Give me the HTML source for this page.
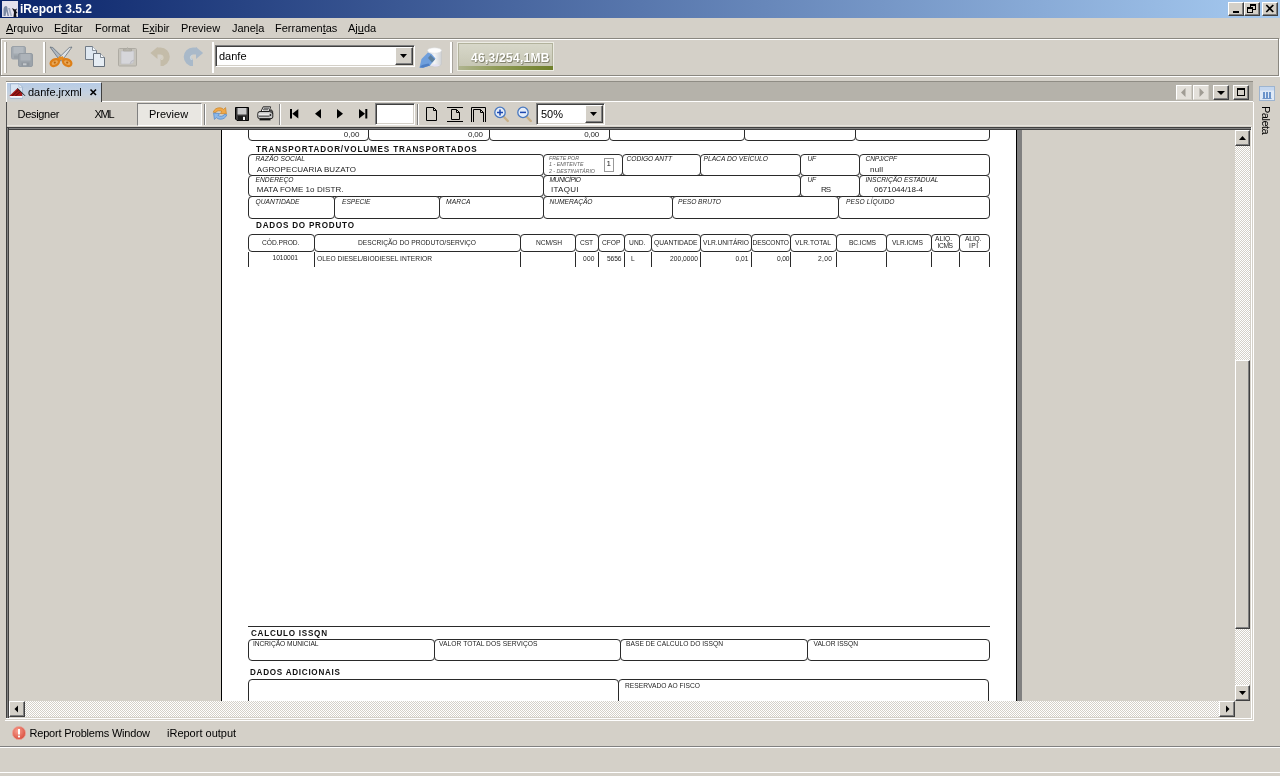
<!DOCTYPE html>
<html><head><meta charset="utf-8"><title>iReport 3.5.2</title>
<style>
*{box-sizing:border-box;margin:0;padding:0}
html,body{width:1280px;height:776px;overflow:hidden;background:#d4d0c8;font-family:"Liberation Sans","DejaVu Sans",sans-serif;font-size:11px;color:#000}
.abs{position:absolute}
#title{left:0;top:0;width:1280px;height:18px;background:linear-gradient(90deg,#0a246a,#a6caf0)}
#title .t{left:20px;top:1px;color:#fff;font-weight:bold;font-size:12px;line-height:16px;white-space:nowrap}
#menu{left:0;top:18px;width:1280px;height:20px}
#menu span{position:absolute;top:3px;font-size:11px;line-height:14px;white-space:nowrap}
#menu u{text-decoration:underline}
/* form */
.bx{position:absolute;border:1px solid #222;border-radius:4px;background:#fff}
.lb{position:absolute;font-size:5.5px;font-style:italic;white-space:nowrap;color:#222;line-height:6px;letter-spacing:-0.1px}
.lbn{position:absolute;font-size:5.5px;white-space:nowrap;color:#222;line-height:6px;letter-spacing:-0.1px}
.vl{position:absolute;font-size:7px;white-space:nowrap;color:#222;line-height:8px}
.hd{position:absolute;font-size:8px;font-weight:bold;white-space:nowrap;color:#111;line-height:9px;letter-spacing:0.9px;transform-origin:0 0;transform:scaleX(.86)}
.th{position:absolute;font-size:5.5px;white-space:nowrap;color:#222;line-height:6px;text-align:center;letter-spacing:-0.15px}
.td{position:absolute;font-size:5.5px;white-space:nowrap;color:#222;line-height:6px;letter-spacing:-0.15px}
.vln{position:absolute;width:1px;background:#222}

.hl{position:absolute;background:#fff}
.sh{position:absolute;background:#808080}
.btn3{position:absolute;background:#d4d0c8;border:1px solid;border-color:#fff #404040 #404040 #fff;box-shadow:inset -1px -1px 0 #808080}
.sunk{position:absolute;background:#fff;border:1px solid;border-color:#808080 #fff #fff #808080;box-shadow:inset 1px 1px 0 #404040,inset -1px -1px 0 #d4d0c8}
svg{position:absolute;overflow:visible}

.dither{position:absolute;background:conic-gradient(#fff 25%,#d4d0c8 0 50%,#fff 0 75%,#d4d0c8 0) 0 0/2px 2px}
.t11{position:absolute;font-size:11px;line-height:14px;white-space:nowrap}
/*FORMCSS*/
.tx{position:absolute;line-height:1;white-space:pre;color:#1c1c1c;font-family:"Liberation Sans",sans-serif}
.ti{font-style:italic}.tb{font-weight:bold;color:#111}.tg{font-style:italic;color:#626262}
.bx{position:absolute;border:1px solid #2a2a2a;border-radius:4px}
.ln{position:absolute;background:#2a2a2a}
/*ENDFORMCSS*/</style></head><body>
<div id="root" style="position:absolute;left:0;top:0;width:1280px;height:776px;will-change:transform">
<div id="title" class="abs"><div class="t abs">iReport 3.5.2</div><svg style="left:2px;top:1px" width="16" height="16">
 <rect x="0" y="0" width="16" height="16" fill="#e4e2ee"/>
 <path d="M1.5 15 V8 Q2 5 4 5 Q5.5 5 5.5 8 L7 15 H5.5 L4.5 10 L3.5 15 Z" fill="#7c8aa4"/>
 <path d="M6 7 L8.5 15 H10 L8 7Z" fill="#a4aec4"/>
 <path d="M10 7 L13 8.5 L15 7.5 L14 10 L15.5 12 L14 12.5 L14.5 16 H11.5 L12 11 Z" fill="#101018"/>
</svg>
<div class="btn3" style="left:1228px;top:2px;width:16px;height:14px"></div>
<div class="abs" style="left:1233px;top:11px;width:6px;height:2px;background:#000"></div>
<div class="btn3" style="left:1244px;top:2px;width:16px;height:14px"></div>
<div class="abs" style="left:1250px;top:4px;width:6px;height:6px;border:1px solid #000;border-top-width:2px"></div>
<div class="abs" style="left:1247px;top:7px;width:6px;height:6px;border:1px solid #000;border-top-width:2px;background:#d4d0c8"></div>
<div class="btn3" style="left:1262px;top:2px;width:16px;height:14px"></div>
<svg style="left:1266px;top:5px" width="8" height="7"><path d="M0.3 0 L7.3 7 M7.3 0 L0.3 7" stroke="#000" stroke-width="1.7"/></svg>
</div>
<div id="menu" class="abs">
<span style="left:6px"><u>A</u>rquivo</span>
<span style="left:54px">E<u>d</u>itar</span>
<span style="left:95px">Format</span>
<span style="left:142px">E<u>x</u>ibir</span>
<span style="left:181px">Preview</span>
<span style="left:232px">Jane<u>l</u>a</span>
<span style="left:275px">Ferramen<u>t</u>as</span>
<span style="left:348px">Aj<u>u</u>da</span>
</div>

<!-- main toolbar frame -->
<div class="abs" style="left:1px;top:39px;width:1279px;height:38px;border:1px solid #fff"></div>
<div class="abs" style="left:0;top:38px;width:1279px;height:38px;border:1px solid #8a8780"></div>
<!-- grips / separators -->
<div class="hl" style="left:4px;top:42px;width:2px;height:31px"></div><div class="sh" style="left:6px;top:42px;width:1px;height:31px;background:#a8a49c"></div>
<div class="hl" style="left:43px;top:42px;width:2px;height:31px"></div><div class="sh" style="left:45px;top:42px;width:1px;height:31px;background:#a8a49c"></div>
<div class="hl" style="left:212px;top:42px;width:2px;height:31px"></div>
<div class="hl" style="left:450px;top:42px;width:2px;height:31px"></div><div class="sh" style="left:452px;top:42px;width:1px;height:31px;background:#a8a49c"></div>

<!-- save all (disabled) -->
<svg style="left:11px;top:46px" width="22" height="21">
 <rect x="0.5" y="0.5" width="14" height="12.5" rx="1.5" fill="#a3aab1" stroke="#9aa1a8"/>
 <rect x="2.5" y="1" width="10" height="6.5" fill="#b3b9bf"/>
 <rect x="3" y="9.5" width="8" height="3" fill="#989fa6"/>
 <rect x="7.5" y="7.5" width="14" height="13" rx="1.5" fill="#9ca3aa" stroke="#949ba2"/>
 <rect x="9.5" y="8" width="10" height="6.5" fill="#adb3b9"/>
 <rect x="10.5" y="16.5" width="8" height="3.5" fill="#8f969d"/>
 <rect x="12" y="17.3" width="3.5" height="2" fill="#c4c8cc"/>
</svg>
<!-- cut -->
<svg style="left:49px;top:46px" width="24" height="22">
 <path d="M1 1 L3.8 1.6 L14.8 12.4 L11.2 15 Z" fill="#aeb7c1" stroke="#66707a" stroke-width=".8"/>
 <path d="M23 1 L20.2 1.6 L9.2 12.4 L12.8 15 Z" fill="#dde2e7" stroke="#66707a" stroke-width=".8"/>
 <path d="M12 11 L8.2 15.4 M12 11 L15.8 15.4" stroke="#e58a1e" stroke-width="3.4"/>
 <ellipse cx="5.8" cy="16.6" rx="4.4" ry="3.1" transform="rotate(-28 5.8 16.6)" fill="#e9a858" stroke="#dd7f18" stroke-width="2.3"/>
 <ellipse cx="18.2" cy="16.6" rx="4.4" ry="3.1" transform="rotate(28 18.2 16.6)" fill="#e9a858" stroke="#dd7f18" stroke-width="2.3"/>
 <circle cx="5.8" cy="16.6" r="1.1" fill="#b8640c"/><circle cx="18.2" cy="16.6" r="1.1" fill="#b8640c"/>
</svg>
<!-- copy -->
<svg style="left:85px;top:46px" width="21" height="21">
 <path d="M0.5 0.5 H7.5 L11.5 4.5 V13.5 H0.5 Z" fill="#dfe8f1" stroke="#707a86"/>
 <path d="M7.5 0.5 V4.5 H11.5" fill="#f6f9fc" stroke="#707a86" stroke-width=".8"/>
 <path d="M8.5 7.5 H15.5 L19.5 11.5 V20.5 H8.5 Z" fill="#e6edf4" stroke="#66707c"/>
 <path d="M15.5 7.5 V11.5 H19.5" fill="#f8fafc" stroke="#66707c" stroke-width=".8"/>
</svg>
<!-- paste (disabled) -->
<svg style="left:118px;top:46px" width="20" height="21">
 <rect x="0.5" y="2.5" width="18" height="17.5" rx="1" fill="#c6c3bb" stroke="#aeaba3"/>
 <path d="M3 5 H16 V14 Q16 18 12 18 H3 Z" fill="#d6d6da" stroke="#bcbcc0" stroke-width=".6"/>
 <path d="M12 18 Q12.5 14.5 16 14" fill="#c4c4cc" stroke="#b0b0b8" stroke-width=".6"/>
 <path d="M5.5 5 V3 H8 Q9.5 0.5 11 3 H13.5 V5 Z" fill="#b8b5ad" stroke="#a6a39b" stroke-width=".7"/>
</svg>
<!-- undo (disabled) -->
<svg style="left:150px;top:46px" width="22" height="21">
 <path d="M7 5 H10.5 A5.8 5.8 0 0 1 10.5 16.6" fill="none" stroke="#c4bca9" stroke-width="7"/>
 <path d="M0.4 7 L7.5 1 V13 Z" fill="#c4bca9"/>
 <path d="M11 9.5 A2 2 0 0 1 11 13.5" fill="none" stroke="#d6d0c2" stroke-width="1.2"/>
</svg>
<!-- redo (disabled) -->
<svg style="left:182px;top:46px" width="22" height="21">
 <path d="M14.5 5 H11 A5.8 5.8 0 0 0 11 16.6" fill="none" stroke="#a9b9c9" stroke-width="7"/>
 <path d="M21.1 7 L14 1 V13 Z" fill="#a9b9c9"/>
 <path d="M10.5 9.5 A2 2 0 0 0 10.5 13.5" fill="none" stroke="#c6d4de" stroke-width="1.2"/>
</svg>
<!-- datasource icon -->
<svg style="left:418px;top:46px" width="26" height="23">
 <defs><linearGradient id="cy" x1="0" x2="1"><stop offset="0" stop-color="#d9dde0"/><stop offset=".5" stop-color="#f2f3f4"/><stop offset="1" stop-color="#cfd2d6"/></linearGradient></defs>
 <path d="M9.5 4.5 V18 A7 2.6 0 0 0 23.5 18 V4.5 Z" fill="url(#cy)" stroke="#c4c6c8" stroke-width=".6"/>
 <ellipse cx="16.5" cy="4.5" rx="7" ry="2.7" fill="#fdfdfd" stroke="#d8dadc" stroke-width=".5"/>
 <path d="M1.5 21.5 L3.5 13 L10 6.5 L13.5 8 L17.5 12.5 L12 19.5 L5 21.8 Z" fill="#6f9fdc"/>
 <path d="M12.5 9 L17 13.5 L14 16.5 L10 12 Z" fill="#5d7f9c"/>
 <path d="M1.5 21.5 L5 21.8 L12 19.5 L10.5 17.5 L4 19 Z" fill="#4f7fc4"/>
 <path d="M13 19.5 Q17 17 22 19.5 Q18 21.5 13 19.5Z" fill="#e4e2f4"/>
</svg>

<!-- combo -->
<div class="sunk" style="left:215px;top:45px;width:200px;height:22px"></div>
<div class="abs" style="left:219px;top:49px;font-size:11px;line-height:14px">danfe</div>
<div class="btn3" style="left:395px;top:47px;width:18px;height:18px"></div>
<svg style="left:400px;top:54px" width="8" height="4"><path d="M0 0h7l-3.5 4z" fill="#000"/></svg>
<!-- memory -->
<div class="abs" style="left:457px;top:42px;width:97px;height:29px;border:1px solid #ecece4;box-shadow:inset 0 0 0 1px #b2b29c;background:linear-gradient(180deg,#d8d8ca 0%,#cfcfbf 45%,#c4c4b0 100%)"></div>
<div class="abs" style="left:459px;top:66px;width:94px;height:4px;background:linear-gradient(90deg,#aeb38e 0%,#909b58 40%,#6f7f2a 100%)"></div>
<div class="abs" style="left:471px;top:51px;width:80px;font-size:12px;font-weight:bold;color:#fff;line-height:14px;white-space:nowrap;text-shadow:1px 1px 0 #84846f,0 1px 0 #9a9a86;letter-spacing:0.28px">46,3/254,1MB</div>


<!-- tab strip -->
<div class="abs" style="left:6px;top:81px;width:1247px;height:20px;background:#b5b2aa"></div>
<div class="abs" style="left:6px;top:81px;width:1247px;height:1px;background:#8f8c84"></div>
<div class="hl" style="left:6px;top:101px;width:1247px;height:1px"></div>
<div class="abs" style="left:6px;top:82px;width:96px;height:20px;background:linear-gradient(180deg,#b6cbe6 0%,#c4d1e0 50%,#d2d1cd 100%);border:1px solid;border-color:#fff #404040 transparent #fff;border-bottom:0"></div>
<div class="t11" style="left:28px;top:85px">danfe.jrxml</div>
<svg style="left:90px;top:89px" width="7" height="7"><path d="M0.5 0.5L6 6M6 0.5L0.5 6" stroke="#000" stroke-width="1.6" fill="none"/></svg>
<svg style="left:9px;top:83px" width="17" height="16">
 <path d="M1.5 0.8 H10 L13.5 4.3 V15.3 H1.5 Z" fill="#d9e5f3" stroke="#9fb4ce" stroke-width=".9"/>
 <path d="M10 0.8 V4.3 H13.5 Z" fill="#f6f9fc" stroke="#9fb4ce" stroke-width=".7"/>
 <path d="M0.3 13 L8.5 5.3 L13.2 10 V13 Z" fill="#a41a1a"/>
 <path d="M3 13 L9.6 6.8 M6.4 13 L11.4 8.6" stroke="#6e0d0d" stroke-width="1.1"/>
 <path d="M8.5 5.3 L16 12.8" stroke="#222" stroke-width="1"/>
 <rect x="1" y="13" width="12.4" height="1.6" fill="#f6f6fa"/>
</svg>
<!-- tab strip right buttons -->
<div class="abs" style="left:1176px;top:85px;width:16px;height:15px;background:#e3e0da;border:1px solid;border-color:#fff #cfccc4 #cfccc4 #fff"></div>
<div class="abs" style="left:1193px;top:85px;width:16px;height:15px;background:#e3e0da;border:1px solid;border-color:#fff #cfccc4 #cfccc4 #fff"></div>
<svg style="left:1181px;top:88px" width="5" height="9"><path d="M4.5 0v9L0 4.5z" fill="#a09c94"/></svg>
<svg style="left:1199px;top:88px" width="5" height="9"><path d="M0.5 0v9L5 4.5z" fill="#a09c94"/></svg>
<div class="btn3" style="left:1213px;top:85px;width:16px;height:15px"></div>
<svg style="left:1217px;top:91px" width="8" height="4"><path d="M0 0h8l-4 4z" fill="#000"/></svg>
<div class="btn3" style="left:1233px;top:85px;width:16px;height:15px"></div>
<div class="abs" style="left:1237px;top:88px;width:8px;height:8px;border:1px solid #000;border-top-width:2px"></div>
<!-- paleta -->
<svg style="left:1259px;top:86px" width="16" height="15">
 <rect x="0.5" y="0.5" width="15" height="14" fill="#dfe9f6" stroke="#9db4d0"/>
 <rect x="1" y="1" width="14" height="3.5" fill="#c4d6ee"/>
 <path d="M5 6 V12 M8 6 V12 M11 6 V12" stroke="#4f7fc0" stroke-width="1.6"/>
 <path d="M3.5 12.5 H12.5" stroke="#6f94c8" stroke-width="1"/>
</svg>
<div class="abs" style="left:1273px;top:106px;font-size:11px;line-height:14px;white-space:nowrap;letter-spacing:-0.5px;transform-origin:0 0;transform:rotate(90deg)">Paleta</div>
<div class="abs" style="left:6px;top:102px;width:1px;height:25px;background:#505050"></div>
<!-- sub toolbar -->
<div class="abs" style="left:7px;top:125px;width:1245px;height:1px;background:#e6e3dd"></div>
<div class="t11" style="left:17.5px;top:107px;letter-spacing:-0.3px">Designer</div>
<div class="t11" style="left:94.5px;top:107px;letter-spacing:-1.3px">XML</div>
<div class="abs" style="left:137px;top:103px;width:65px;height:23px;background:#e9e7e2;border:1px solid;border-color:#808080 #fff #fff #808080"></div>
<div class="t11" style="left:149px;top:107px">Preview</div>
<div class="sh" style="left:204px;top:104px;width:1px;height:21px"></div><div class="hl" style="left:205px;top:104px;width:1px;height:21px"></div>
<div class="sh" style="left:279px;top:104px;width:1px;height:21px"></div><div class="hl" style="left:280px;top:104px;width:1px;height:21px"></div>
<div class="sh" style="left:417px;top:104px;width:1px;height:21px"></div><div class="hl" style="left:418px;top:104px;width:1px;height:21px"></div>

<!-- refresh -->
<svg style="left:212px;top:106px" width="16" height="15">
 <path d="M1.2 6.2 Q3 1.6 8 1.8 Q10.5 2 11.6 3.4 L13.6 1.6 L14.4 8 L8.2 7.4 L10 5.6 Q8.4 4.4 6.2 4.8 Q3.6 5.4 3.4 7 Z" fill="#f0a848" stroke="#c88428" stroke-width=".7"/>
 <path d="M14.8 8.8 Q13 13.4 8 13.2 Q5.5 13 4.4 11.6 L2.4 13.4 L1.6 7 L7.8 7.6 L6 9.4 Q7.6 10.6 9.8 10.2 Q12.4 9.6 12.6 8 Z" fill="#8cb8e8" stroke="#4c84c8" stroke-width=".7"/>
</svg>
<!-- save -->
<svg style="left:235px;top:107px" width="14" height="14">
 <path d="M0.5 0.5 H13.5 V13.5 H2 L0.5 12 Z" fill="#3a3a3a" stroke="#000"/>
 <rect x="2.5" y="1" width="9" height="6.5" fill="#c9c9c9"/>
 <rect x="3" y="9" width="8" height="4.5" fill="#1a1a1a"/>
 <rect x="8" y="9.8" width="2" height="3.2" fill="#f4f4f4"/>
</svg>
<!-- print -->
<svg style="left:257px;top:106px" width="17" height="15">
 <path d="M4 5.5 L6.2 0.8 H13.6 L12 5.5 Z" fill="#fff" stroke="#111" stroke-width=".9"/>
 <path d="M6.6 2.2 H12 M6 3.8 H11.4" stroke="#222" stroke-width=".9"/>
 <path d="M0.8 7.5 Q0.8 5.5 3 5.5 H13 Q15.8 5.5 15.8 8 V11 Q15.8 12.6 14 12.6 H2.6 Q0.8 12.6 0.8 11 Z" fill="#c8c8c8" stroke="#111" stroke-width=".9"/>
 <path d="M12 5.5 L14 3.5 Q16.2 4.5 15.8 8" fill="#555" stroke="#111" stroke-width=".7"/>
 <path d="M1.5 8.2 H12.5" stroke="#f4f4f4" stroke-width="1.2"/>
 <path d="M2 10.2 H12.5" stroke="#444" stroke-width="1"/>
 <path d="M2.5 13.6 H13.5" stroke="#111" stroke-width="1.6"/>
 <circle cx="13.4" cy="9" r=".9" fill="#222"/>
</svg>
<!-- nav -->
<svg style="left:290px;top:109px" width="9" height="10"><rect x="0" y="0" width="2" height="9.5" fill="#000"/><path d="M8.3 0 V9.5 L2.3 4.75 Z" fill="#000"/></svg>
<svg style="left:315px;top:109px" width="7" height="10"><path d="M6 0 V9.5 L0 4.75 Z" fill="#000"/></svg>
<svg style="left:337px;top:109px" width="7" height="10"><path d="M0 0 V9.5 L6 4.75 Z" fill="#000"/></svg>
<svg style="left:359px;top:109px" width="9" height="10"><path d="M0 0 V9.5 L6 4.75 Z" fill="#000"/><rect x="6.3" y="0" width="2" height="9.5" fill="#000"/></svg>
<!-- actual size -->
<svg style="left:426px;top:107px" width="12" height="14"><path d="M0.5 0.5 H7.5 L10.5 3.5 V13.5 H0.5 Z" fill="none" stroke="#000"/><path d="M7.5 0.5 V3.5 H10.5" fill="none" stroke="#000"/></svg>
<!-- fit page -->
<svg style="left:447px;top:106px" width="17" height="16"><path d="M0 1.5 H16 M0 15.5 H16" stroke="#000" stroke-width="1"/><path d="M4.5 3.5 H9.5 L12.5 6.5 V13.5 H4.5 Z" fill="none" stroke="#000"/><path d="M9.5 3.5 V6.5 H12.5" fill="none" stroke="#000"/></svg>
<!-- fit width -->
<svg style="left:470px;top:106px" width="17" height="16"><path d="M1.5 16 V1.5 H15.5 V16" fill="none" stroke="#000" stroke-width="1"/><path d="M3.5 16 V3.5 H10.5 L13.5 6.5 V16" fill="none" stroke="#000"/><path d="M10.5 3.5 V6.5 H13.5" fill="none" stroke="#000"/></svg>
<!-- zoom in -->
<svg style="left:494px;top:106px" width="16" height="17">
 <path d="M9.5 10.5 L13.8 15" stroke="#c8b088" stroke-width="2.4" stroke-linecap="round"/>
 <circle cx="6" cy="6.4" r="5.2" fill="#e4ecf8" stroke="#4878c0" stroke-width="1.3"/>
 <path d="M3 6.4 H9 M6 3.4 V9.4" stroke="#1c48b0" stroke-width="1.5"/>
</svg>
<!-- zoom out -->
<svg style="left:517px;top:106px" width="16" height="17">
 <path d="M9.5 10.5 L13.8 15" stroke="#c8b088" stroke-width="2.4" stroke-linecap="round"/>
 <circle cx="6" cy="6.4" r="5.2" fill="#e4ecf8" stroke="#4878c0" stroke-width="1.3"/>
 <path d="M3 6.4 H9" stroke="#1c48b0" stroke-width="1.5"/>
</svg>

<div class="sunk" style="left:375px;top:103px;width:40px;height:22px"></div>
<div class="sunk" style="left:536px;top:103px;width:69px;height:22px"></div>
<div class="t11" style="left:541px;top:107px">50%</div>
<div class="btn3" style="left:585px;top:105px;width:18px;height:18px"></div>
<svg style="left:590px;top:112px" width="8" height="4"><path d="M0 0h7l-3.5 4z" fill="#000"/></svg>


<!-- viewport frame -->
<div class="abs" style="left:6px;top:127px;width:1245px;height:3px;background:#808080;border-top:1px solid #404040;border-bottom:1px solid #404040"></div>
<div class="abs" style="left:6px;top:127px;width:3px;height:591px;background:#808080;border-left:1px solid #404040;border-right:1px solid #404040"></div>
<div class="abs" style="left:6px;top:127px;width:1245px;height:1px;background:#404040"></div>
<div class="abs" style="left:8px;top:129px;width:1243px;height:1px;background:#404040"></div>
<div class="hl" style="left:6px;top:718px;width:1246px;height:1px"></div>
<div class="hl" style="left:1251px;top:127px;width:1px;height:592px"></div>
<div id="vp" class="abs" style="left:9px;top:130px;width:1226px;height:571px;overflow:hidden;background:#d4d0c8">
 <div class="abs" style="left:212px;top:0;width:796px;height:600px;background:#fff;border-left:1px solid #000;border-right:1px solid #000"></div>
 <div class="abs" style="left:1008px;top:0;width:5px;height:600px;background:#808080"></div>
 <div id="pg" class="abs" style="left:-9px;top:-130px;width:1280px;height:776px;will-change:transform">
<!--FORM-->
<div class="bx" style="left:248px;top:105px;width:121px;height:36px"></div>
<div class="bx" style="left:368px;top:105px;width:122px;height:36px"></div>
<div class="bx" style="left:489px;top:105px;width:121px;height:36px"></div>
<div class="bx" style="left:609px;top:105px;width:136px;height:36px"></div>
<div class="bx" style="left:744px;top:105px;width:112px;height:36px"></div>
<div class="bx" style="left:855px;top:105px;width:135px;height:36px"></div>
<div class="bx" style="left:248px;top:154px;width:296px;height:22px"></div>
<div class="bx" style="left:543px;top:154px;width:80px;height:22px"></div>
<div class="bx" style="left:622px;top:154px;width:79px;height:22px"></div>
<div class="bx" style="left:700px;top:154px;width:101px;height:22px"></div>
<div class="bx" style="left:800px;top:154px;width:60px;height:22px"></div>
<div class="bx" style="left:859px;top:154px;width:131px;height:22px"></div>
<div class="bx" style="left:248px;top:175px;width:296px;height:22px"></div>
<div class="bx" style="left:543px;top:175px;width:258px;height:22px"></div>
<div class="bx" style="left:800px;top:175px;width:60px;height:22px"></div>
<div class="bx" style="left:859px;top:175px;width:131px;height:22px"></div>
<div class="bx" style="left:248px;top:196px;width:87px;height:23px"></div>
<div class="bx" style="left:334px;top:196px;width:106px;height:23px"></div>
<div class="bx" style="left:439px;top:196px;width:105px;height:23px"></div>
<div class="bx" style="left:543px;top:196px;width:130px;height:23px"></div>
<div class="bx" style="left:672px;top:196px;width:167px;height:23px"></div>
<div class="bx" style="left:838px;top:196px;width:152px;height:23px"></div>
<div class="bx" style="left:248px;top:234px;width:67px;height:18px"></div>
<div class="bx" style="left:314px;top:234px;width:207px;height:18px"></div>
<div class="bx" style="left:520px;top:234px;width:56px;height:18px"></div>
<div class="bx" style="left:575px;top:234px;width:24px;height:18px"></div>
<div class="bx" style="left:598px;top:234px;width:27px;height:18px"></div>
<div class="bx" style="left:624px;top:234px;width:28px;height:18px"></div>
<div class="bx" style="left:651px;top:234px;width:50px;height:18px"></div>
<div class="bx" style="left:700px;top:234px;width:52px;height:18px"></div>
<div class="bx" style="left:751px;top:234px;width:40px;height:18px"></div>
<div class="bx" style="left:790px;top:234px;width:47px;height:18px"></div>
<div class="bx" style="left:836px;top:234px;width:51px;height:18px"></div>
<div class="bx" style="left:886px;top:234px;width:46px;height:18px"></div>
<div class="bx" style="left:931px;top:234px;width:29px;height:18px"></div>
<div class="bx" style="left:959px;top:234px;width:31px;height:18px"></div>
<div class="bx" style="left:248px;top:639px;width:187px;height:22px"></div>
<div class="bx" style="left:434px;top:639px;width:187px;height:22px"></div>
<div class="bx" style="left:620px;top:639px;width:188px;height:22px"></div>
<div class="bx" style="left:807px;top:639px;width:183px;height:22px"></div>
<div class="bx" style="left:248px;top:679px;width:371px;height:62px"></div>
<div class="bx" style="left:618px;top:679px;width:371px;height:62px"></div>
<div class="ln" style="left:248px;top:252px;width:1px;height:15px"></div>
<div class="ln" style="left:314px;top:252px;width:1px;height:15px"></div>
<div class="ln" style="left:520px;top:252px;width:1px;height:15px"></div>
<div class="ln" style="left:575px;top:252px;width:1px;height:15px"></div>
<div class="ln" style="left:598px;top:252px;width:1px;height:15px"></div>
<div class="ln" style="left:624px;top:252px;width:1px;height:15px"></div>
<div class="ln" style="left:651px;top:252px;width:1px;height:15px"></div>
<div class="ln" style="left:700px;top:252px;width:1px;height:15px"></div>
<div class="ln" style="left:751px;top:252px;width:1px;height:15px"></div>
<div class="ln" style="left:790px;top:252px;width:1px;height:15px"></div>
<div class="ln" style="left:836px;top:252px;width:1px;height:15px"></div>
<div class="ln" style="left:886px;top:252px;width:1px;height:15px"></div>
<div class="ln" style="left:931px;top:252px;width:1px;height:15px"></div>
<div class="ln" style="left:959px;top:252px;width:1px;height:15px"></div>
<div class="ln" style="left:989px;top:252px;width:1px;height:15px"></div>
<div class="ln" style="left:248px;top:626px;width:742px;height:1px"></div>
<div class="abs" style="left:604px;top:158px;width:10px;height:14px;border:1px solid #999"></div>
<span class="tx" style="left:343.75px;top:130.73px;font-size:8px;letter-spacing:0.057px">0,00</span>
<span class="tx" style="left:468.00px;top:130.73px;font-size:8px;letter-spacing:-0.193px">0,00</span>
<span class="tx" style="left:584.25px;top:130.73px;font-size:8px;letter-spacing:-0.193px">0,00</span>
<span class="tx tb" style="transform-origin:0 0;transform:scaleX(0.87);left:255.50px;top:144.60px;font-size:9.33px;letter-spacing:0.979px">TRANSPORTADOR/VOLUMES TRANSPORTADOS</span>
<span class="tx ti" style="left:255.50px;top:155.60px;font-size:6.67px;letter-spacing:0.027px">RAZÃO SOCIAL</span>
<span class="tx" style="left:256.75px;top:165.73px;font-size:8px;letter-spacing:0.072px">AGROPECUARIA BUZATO</span>
<span class="tx ti" style="left:255.50px;top:176.85px;font-size:6.67px;letter-spacing:0.038px">ENDEREÇO</span>
<span class="tx" style="left:256.75px;top:185.73px;font-size:8px;letter-spacing:0.069px">MATA FOME 1o DISTR.</span>
<span class="tx ti" style="left:255.50px;top:198.85px;font-size:6.67px;letter-spacing:0.040px">QUANTIDADE</span>
<span class="tx ti" style="left:342.00px;top:198.85px;font-size:6.67px;letter-spacing:-0.060px">ESPECIE</span>
<span class="tx ti" style="left:446.00px;top:198.85px;font-size:6.67px;letter-spacing:0.113px">MARCA</span>
<span class="tx tg" style="left:549.00px;top:155.99px;font-size:5.33px;letter-spacing:-0.062px">FRETE POR</span>
<span class="tx tg" style="left:549.00px;top:162.49px;font-size:5.33px;letter-spacing:-0.013px">1 - EMITENTE</span>
<span class="tx tg" style="left:549.00px;top:168.99px;font-size:5.33px;letter-spacing:-0.046px">2 - DESTINATÁRIO</span>
<span class="tx" style="left:606.50px;top:159.73px;font-size:8px">1</span>
<span class="tx ti" style="left:626.50px;top:155.60px;font-size:6.67px;letter-spacing:-0.048px">CODIGO ANTT</span>
<span class="tx ti" style="left:703.50px;top:155.60px;font-size:6.67px">PLACA DO VEÍCULO</span>
<span class="tx ti" style="left:807.50px;top:155.60px;font-size:6.67px;letter-spacing:-0.375px">UF</span>
<span class="tx ti" style="left:865.50px;top:155.60px;font-size:6.67px;letter-spacing:-0.150px">CNPJ/CPF</span>
<span class="tx" style="left:870.00px;top:165.73px;font-size:8px;letter-spacing:0.182px">null</span>
<span class="tx ti" style="left:549.50px;top:176.85px;font-size:6.67px;letter-spacing:-0.455px">MUNICÍPIO</span>
<span class="tx" style="left:551.00px;top:185.73px;font-size:8px;letter-spacing:0.284px">ITAQUI</span>
<span class="tx ti" style="left:807.50px;top:176.85px;font-size:6.67px;letter-spacing:-0.375px">UF</span>
<span class="tx" style="left:821.00px;top:185.73px;font-size:8px;letter-spacing:-1.125px">RS</span>
<span class="tx ti" style="left:865.50px;top:176.85px;font-size:6.67px;letter-spacing:-0.028px">INSCRIÇÃO ESTADUAL</span>
<span class="tx" style="left:874.00px;top:185.73px;font-size:8px;letter-spacing:-0.036px">0671044/18-4</span>
<span class="tx ti" style="left:549.50px;top:198.85px;font-size:6.67px;letter-spacing:-0.035px">NUMERAÇÃO</span>
<span class="tx ti" style="left:678.00px;top:198.85px;font-size:6.67px;letter-spacing:-0.059px">PESO BRUTO</span>
<span class="tx ti" style="left:846.00px;top:198.85px;font-size:6.67px;letter-spacing:0.071px">PESO LÍQUIDO</span>
<span class="tx tb" style="transform-origin:0 0;transform:scaleX(0.87);left:255.50px;top:220.60px;font-size:9.33px;letter-spacing:0.887px">DADOS DO PRODUTO</span>
<span class="tx" style="left:262.00px;top:239.85px;font-size:6.67px;letter-spacing:-0.029px">CÓD.PROD.</span>
<span class="tx" style="left:358.00px;top:239.85px;font-size:6.67px;letter-spacing:-0.004px">DESCRIÇÃO DO PRODUTO/SERVIÇO</span>
<span class="tx" style="left:536.00px;top:239.85px;font-size:6.67px;letter-spacing:-0.053px">NCM/SH</span>
<span class="tx" style="left:580.00px;top:239.85px;font-size:6.67px;letter-spacing:-0.156px">CST</span>
<span class="tx" style="left:602.00px;top:239.85px;font-size:6.67px">CFOP</span>
<span class="tx" style="left:629.00px;top:239.85px;font-size:6.67px;letter-spacing:0.073px">UND.</span>
<span class="tx" style="left:654.00px;top:239.85px;font-size:6.67px;letter-spacing:-0.016px">QUANTIDADE</span>
<span class="tx" style="left:703.00px;top:239.85px;font-size:6.67px;letter-spacing:-0.055px">VLR.UNITÁRIO</span>
<span class="tx" style="left:752.50px;top:239.85px;font-size:6.67px;letter-spacing:-0.158px">DESCONTO</span>
<span class="tx" style="left:795.00px;top:239.85px;font-size:6.67px;letter-spacing:0.045px">VLR.TOTAL</span>
<span class="tx" style="left:849.00px;top:239.85px;font-size:6.67px;letter-spacing:-0.125px">BC.ICMS</span>
<span class="tx" style="left:892.00px;top:239.85px;font-size:6.67px;letter-spacing:-0.065px">VLR.ICMS</span>
<span class="tx" style="left:935.00px;top:235.85px;font-size:6.67px;letter-spacing:-0.008px">ALIQ.</span>
<span class="tx" style="left:937.50px;top:243.35px;font-size:6.67px;letter-spacing:-0.380px">ICMS</span>
<span class="tx" style="left:965.00px;top:235.85px;font-size:6.67px;letter-spacing:-0.133px">ALIQ.</span>
<span class="tx" style="left:969.00px;top:243.35px;font-size:6.67px;letter-spacing:0.430px">IPI</span>
<span class="tx" style="left:272.50px;top:254.85px;font-size:6.67px;letter-spacing:-0.070px">1010001</span>
<span class="tx" style="left:317.00px;top:255.85px;font-size:6.67px;letter-spacing:0.020px">OLEO DIESEL/BIODIESEL INTERIOR</span>
<span class="tx" style="left:583.00px;top:255.85px;font-size:6.67px;letter-spacing:0.195px">000</span>
<span class="tx" style="left:607.00px;top:255.85px;font-size:6.67px;letter-spacing:-0.104px">5656</span>
<span class="tx" style="left:631.00px;top:255.85px;font-size:6.67px">L</span>
<span class="tx" style="left:670.00px;top:255.85px;font-size:6.67px;letter-spacing:0.033px">200,0000</span>
<span class="tx" style="left:735.50px;top:255.85px;font-size:6.67px;letter-spacing:0.010px">0,01</span>
<span class="tx" style="left:777.00px;top:255.85px;font-size:6.67px;letter-spacing:-0.156px">0,00</span>
<span class="tx" style="left:818.00px;top:255.85px;font-size:6.67px;letter-spacing:0.344px">2,00</span>
<span class="tx tb" style="transform-origin:0 0;transform:scaleX(0.87);left:250.50px;top:628.60px;font-size:9.33px;letter-spacing:0.845px">CALCULO ISSQN</span>
<span class="tx" style="left:253.00px;top:640.85px;font-size:6.67px;letter-spacing:-0.044px">INCRIÇÃO MUNICIAL</span>
<span class="tx" style="left:439.00px;top:640.85px;font-size:6.67px;letter-spacing:0.074px">VALOR TOTAL DOS SERVIÇOS</span>
<span class="tx" style="left:626.00px;top:640.85px;font-size:6.67px;letter-spacing:0.020px">BASE DE CALCULO DO ISSQN</span>
<span class="tx" style="left:813.50px;top:640.85px;font-size:6.67px;letter-spacing:-0.014px">VALOR ISSQN</span>
<span class="tx tb" style="transform-origin:0 0;transform:scaleX(0.87);left:249.50px;top:668.10px;font-size:9.33px;letter-spacing:0.838px">DADOS ADICIONAIS</span>
<span class="tx" style="left:625.00px;top:682.85px;font-size:6.67px;letter-spacing:0.031px">RESERVADO AO FISCO</span>
<!--ENDFORM-->
 </div>
</div>
<div class="hl" style="left:5px;top:720px;width:1249px;height:1px"></div>
<div class="hl" style="left:1253px;top:102px;width:1px;height:619px"></div>
<!-- v scrollbar -->
<div class="dither" style="left:1235px;top:130px;width:15px;height:571px"></div>
<div class="btn3" style="left:1235px;top:130px;width:15px;height:16px"></div>
<svg style="left:1239px;top:136px" width="7" height="4"><path d="M0 4h7l-3.5 -4z" fill="#000"/></svg>
<div class="btn3" style="left:1235px;top:685px;width:15px;height:16px"></div>
<svg style="left:1239px;top:691px" width="7" height="4"><path d="M0 0h7l-3.5 4z" fill="#000"/></svg>
<div class="btn3" style="left:1235px;top:360px;width:15px;height:269px"></div>
<!-- h scrollbar -->
<div class="dither" style="left:9px;top:701px;width:1226px;height:16px"></div>
<div class="btn3" style="left:9px;top:701px;width:16px;height:16px"></div>
<svg style="left:14px;top:705px" width="4" height="8"><path d="M4 0.5v7l-3.5 -3.5z" fill="#000"/></svg>
<div class="btn3" style="left:1219px;top:701px;width:16px;height:16px"></div>
<svg style="left:1226px;top:705px" width="4" height="8"><path d="M0 0.5v7l3.5 -3.5z" fill="#000"/></svg>
<div class="abs" style="left:1235px;top:701px;width:16px;height:16px;background:#d4d0c8"></div>
<div class="t11" style="left:29.5px;top:726px;letter-spacing:-0.2px">Report Problems Window</div>
<div class="t11" style="left:167px;top:726px">iReport output</div>
<svg style="left:12px;top:726px" width="14" height="14"><defs><radialGradient id="eg" cx="40%" cy="35%" r="70%"><stop offset="0" stop-color="#f8a090"/><stop offset="1" stop-color="#d84a3a"/></radialGradient></defs><circle cx="7" cy="7" r="6.6" fill="url(#eg)" stroke="#e8a69a" stroke-width=".8"/><rect x="6" y="3" width="2" height="5.5" fill="#fff"/><rect x="6" y="9.6" width="2" height="1.8" fill="#fff"/></svg>
<div class="sh" style="left:0;top:746px;width:1280px;height:1px"></div>
<div class="hl" style="left:0;top:747px;width:1280px;height:1px"></div>
<div class="hl" style="left:0;top:772px;width:1280px;height:1px"></div>

</div>
</body></html>
